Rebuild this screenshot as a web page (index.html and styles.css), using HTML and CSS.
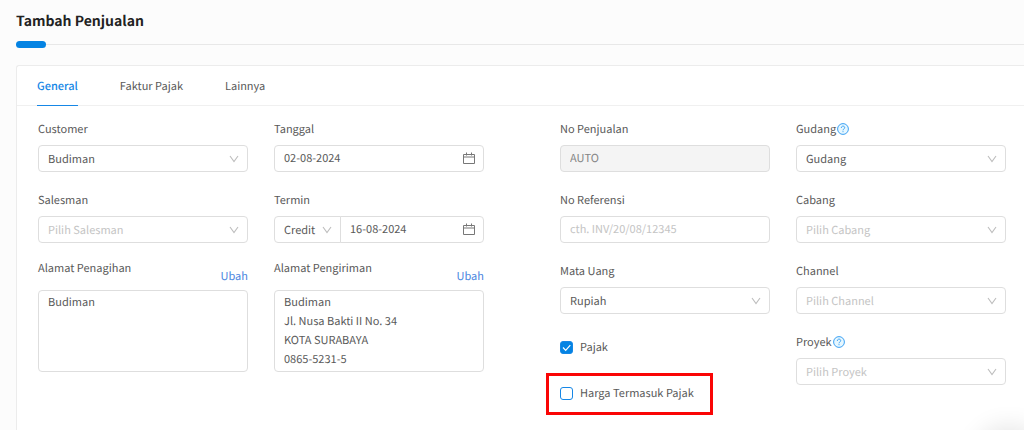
FILE: index.html
```html
<!DOCTYPE html>
<html lang="id">
<head>
<meta charset="utf-8">
<meta name="viewport" content="width=device-width, initial-scale=1">
<title>Tambah Penjualan</title>
<link rel="stylesheet" href="styles.css">
</head>
<body>
<svg class="defs" aria-hidden="true">
  <symbol id="chevron" viewBox="0 0 10 8"><path d="M1 1l4 5.600L9 1" fill="none" stroke="currentColor" stroke-width="1.100"/></symbol>
  <symbol id="calendar" viewBox="0 0 12 12"><path d="M.500 2.500h11v9H.500zM.500 5h11M3.500 .500v3M8.500 .500v3" fill="none" stroke="currentColor"/></symbol>
  <symbol id="help" viewBox="0 0 12 12"><circle cx="6" cy="6" r="5.400" fill="#e6f7ff" stroke="currentColor"/><path d="M4.300 4.900C4.300 2.600 7.700 2.600 7.700 4.700C7.700 6 6 5.900 6 7.300M6 8.200v1" fill="none" stroke="currentColor"/></symbol>
</svg>

<header class="page-head">
  <h1 class="title">Tambah Penjualan</h1>
  <div class="divider"><span class="divider-mark"></span></div>
</header>

<main class="card">
  <nav class="tabs">
    <a class="tab tab-active" href="#general">General</a>
    <a class="tab" href="#faktur">Faktur Pajak</a>
    <a class="tab" href="#lainnya">Lainnya</a>
  </nav>

  <form class="form" id="general">
    <div class="group">
      <div class="column">
        <div class="field">
          <label class="label" for="customer">Customer</label>
          <div class="control"><select class="input" id="customer"><option>Budiman</option></select><svg class="chevron"><use href="#chevron"/></svg></div>
        </div>
        <div class="field">
          <label class="label" for="salesman">Salesman</label>
          <div class="control"><select class="input empty" id="salesman"><option>Pilih Salesman</option></select><svg class="chevron"><use href="#chevron"/></svg></div>
        </div>
        <div class="field">
          <div class="address-head"><label class="address-label" for="billing">Alamat Penagihan</label><a class="edit" href="#billing">Ubah</a></div>
          <textarea class="address" id="billing">Budiman</textarea>
        </div>
      </div>
      <div class="column">
        <div class="field">
          <label class="label" for="date">Tanggal</label>
          <div class="control"><input class="input text" id="date" type="text" value="02-08-2024"><svg class="calendar"><use href="#calendar"/></svg></div>
        </div>
        <div class="field">
          <label class="label" for="term">Termin</label>
          <div class="joined">
            <div class="control term"><select class="input" id="term"><option>Credit</option></select><svg class="chevron"><use href="#chevron"/></svg></div>
            <div class="control due"><input class="input text" type="text" value="16-08-2024" aria-label="Jatuh tempo"><svg class="calendar"><use href="#calendar"/></svg></div>
          </div>
        </div>
        <div class="field">
          <div class="address-head"><label class="address-label" for="shipping">Alamat Pengiriman</label><a class="edit" href="#shipping">Ubah</a></div>
          <textarea class="address" id="shipping">Budiman
Jl. Nusa Bakti II No. 34
KOTA SURABAYA
0865-5231-5</textarea>
        </div>
      </div>
    </div>

    <div class="group">
      <div class="column">
        <div class="field">
          <label class="label" for="number">No Penjualan</label>
          <div class="control"><input class="input text" id="number" type="text" value="AUTO" disabled></div>
        </div>
        <div class="field">
          <label class="label" for="reference">No Referensi</label>
          <div class="control"><input class="input text" id="reference" type="text" placeholder="cth. INV/20/08/12345"></div>
        </div>
        <div class="field">
          <label class="label" for="currency">Mata Uang</label>
          <div class="control"><select class="input" id="currency"><option>Rupiah</option></select><svg class="chevron"><use href="#chevron"/></svg></div>
        </div>
        <div class="checks">
          <label class="check"><span class="tick"><input class="box" type="checkbox" checked><svg class="tick-mark" viewBox="0 0 13 13"><path d="M3 6.500l2.700 2.800L10.300 4.200" fill="none" stroke="#fff" stroke-width="1.200"/></svg></span>Pajak</label>
          <div class="highlight">
            <label class="check"><input class="box" type="checkbox">Harga Termasuk Pajak</label>
          </div>
        </div>
      </div>
      <div class="column">
        <div class="field">
          <label class="label" for="warehouse">Gudang <svg class="help"><use href="#help"/></svg></label>
          <div class="control"><select class="input" id="warehouse"><option>Gudang</option></select><svg class="chevron"><use href="#chevron"/></svg></div>
        </div>
        <div class="field">
          <label class="label" for="branch">Cabang</label>
          <div class="control"><select class="input empty" id="branch"><option>Pilih Cabang</option></select><svg class="chevron"><use href="#chevron"/></svg></div>
        </div>
        <div class="field">
          <label class="label" for="channel">Channel</label>
          <div class="control"><select class="input empty" id="channel"><option>Pilih Channel</option></select><svg class="chevron"><use href="#chevron"/></svg></div>
        </div>
        <div class="field">
          <label class="label" for="project">Proyek <svg class="help"><use href="#help"/></svg></label>
          <div class="control"><select class="input empty" id="project"><option>Pilih Proyek</option></select><svg class="chevron"><use href="#chevron"/></svg></div>
        </div>
      </div>
    </div>
  </form>
</main>
<div class="corner-shadow"></div>
</body>
</html>
```

FILE: styles.css
```css
* { box-sizing: border-box; }

body {
  margin: 0;
  min-height: 100vh;
  padding: 11px 0 0 16px;
  display: flex;
  flex-direction: column;
  overflow: hidden;
  background: #fcfcfc;
  color: #595959;
  font: 11px/18px "Noto Sans CJK JP", "Noto Sans", sans-serif;
  text-rendering: geometricPrecision;
}

.defs { position: absolute; width: 0; height: 0; }

.title {
  margin: 0;
  color: #222;
  font-size: 14px;
  line-height: 20px;
  font-weight: 700;
}

.divider {
  display: flex;
  align-items: center;
  margin: 10px 0 17px;
}
.divider::after { content: ""; flex: 1; height: 1px; background: #e8e8e8; }
.divider-mark { width: 30px; height: 7px; border-radius: 4px; background: #0483e3; }

.card {
  flex: 1;
  background: #fff;
  border: 1px solid #ececec;
  border-width: 1px 0 0 1px;
  border-radius: 3px 0 0 0;
}

.tabs {
  display: flex;
  gap: 42px;
  padding: 0 20px;
  border-bottom: 1px solid #f0f0f0;
}
.tab {
  padding: 11px 0 10px;
  margin-bottom: -1px;
  border-bottom: 1px solid transparent;
  color: #595959;
  text-decoration: none;
}
.tab-active { color: #1687e6; border-color: #1687e6; font-weight: 500; }

.form {
  display: grid;
  grid-template-columns: 1fr 1fr;
  gap: 76px;
  padding: 14px 18px 0 21px;
}
.group { display: grid; grid-template-columns: 1fr 1fr; gap: 26px; }
.column { display: flex; flex-direction: column; gap: 19px; min-width: 0; }

.label { display: flex; align-items: center; gap: 1px; margin-bottom: 7px; }
.help { width: 12px; height: 12px; color: #3ba0f3; }

.control { position: relative; }
.input {
  display: block;
  width: 100%;
  height: 27px;
  margin: 0;
  padding: 0 9px;
  appearance: none;
  border: 1px solid #dedede;
  border-radius: 4px;
  background: #fff;
  color: #595959;
  font: inherit;
  text-rendering: inherit;
}
.input.text { padding-bottom: 2px; }
.input.empty, .input::placeholder { color: #c4c4c4; opacity: 1; }
.input:disabled { background: #f4f4f4; color: #858585; }
.chevron { position: absolute; right: 9px; top: 10px; width: 10px; height: 8px; color: #bdbdbd; pointer-events: none; }
.calendar { position: absolute; right: 9px; top: 7px; width: 12px; height: 12px; color: #777; }

.joined { display: flex; }
.term { flex: 0 0 67px; margin-right: -1px; }
.term .input { border-radius: 4px 0 0 4px; }
.due { flex: 1; }
.due .input { border-radius: 0 4px 4px 0; }

.address-head {
  display: flex;
  justify-content: space-between;
  align-items: flex-end;
  padding-bottom: 7px;
}
.address-label { align-self: flex-start; line-height: 12px; }
.edit { padding-top: 7px; color: #4a86e0; line-height: 14px; text-decoration: none; }
.address {
  display: block;
  width: 100%;
  height: 82px;
  margin: 0;
  padding: 2px 9px;
  resize: none;
  overflow: hidden;
  border: 1px solid #dedede;
  border-radius: 4px;
  background: #fff;
  color: #595959;
  font: inherit;
  line-height: 19px;
  text-rendering: inherit;
}

.checks { padding-top: 5px; }
.check { display: flex; align-items: center; gap: 7px; }
.tick { position: relative; display: flex; }
.tick-mark { position: absolute; inset: 0; pointer-events: none; }
.box {
  width: 13px;
  height: 13px;
  margin: 0;
  appearance: none;
  border: 1px solid #1687e6;
  border-radius: 3px;
  background: #fff;
}
.box:checked { background: #0483e3; }
.highlight {
  width: fit-content;
  margin: 17px 0 0 -14px;
  padding: 8px 16px 10px 11px;
  border: 3px solid #fa0505;
}

.corner-shadow {
  position: fixed;
  right: -10px;
  bottom: -44px;
  width: 50px;
  height: 40px;
  border-radius: 50%;
  box-shadow: 0 0 24px 8px rgba(0, 0, 0, .1);
}
```
